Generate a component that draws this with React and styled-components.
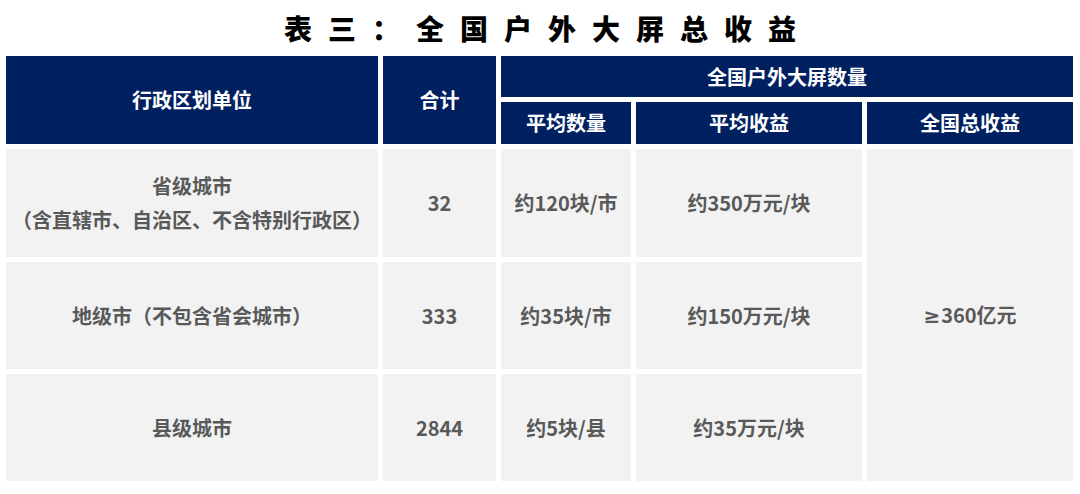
import React from 'react';
import styled, { createGlobalStyle } from 'styled-components';

const GlobalStyle = createGlobalStyle`
  html, body {
    margin: 0;
    padding: 0;
    background: #ffffff;
  }
  body {
    font-family: "Noto Sans CJK SC", "Noto Sans", sans-serif;
  }
`;

const Page = styled.div`
  width: 1080px;
  height: 494px;
  padding: 0 6px;
  box-sizing: border-box;
  background: #ffffff;
`;

const Title = styled.h1`
  margin: 0;
  height: 56px;
  display: flex;
  align-items: center;
  justify-content: center;
  padding-left: 16px;
  font-size: 28px;
  font-weight: 900;
  letter-spacing: 16px;
  color: #000000;
`;

const Grid = styled.div`
  display: grid;
  grid-template-columns: 372px 113px 130px 226px 206px;
  grid-template-rows: 41px 42px 108px 107px 107px;
  gap: 5px;
`;

const Cell = styled.div`
  grid-column: ${(p) => p.$col};
  grid-row: ${(p) => p.$row};
  display: flex;
  flex-direction: column;
  align-items: center;
  justify-content: center;
  text-align: center;
  font-size: 20px;
  font-weight: 700;
  line-height: 34px;
  background: ${(p) => (p.$head ? '#002060' : '#f2f2f2')};
  color: ${(p) => (p.$head ? '#ffffff' : '#595959')};
`;

const Sign = styled.span`
  font-family: "Noto Sans", "DejaVu Sans", sans-serif;
  font-weight: 700;
  margin-right: 1px;
`;

const rows = [
  {
    name: ['省级城市', '（含直辖市、自治区、不含特别行政区）'],
    total: '32',
    count: '约120块/市',
    income: '约350万元/块',
  },
  {
    name: ['地级市（不包含省会城市）'],
    total: '333',
    count: '约35块/市',
    income: '约150万元/块',
  },
  {
    name: ['县级城市'],
    total: '2844',
    count: '约5块/县',
    income: '约35万元/块',
  },
];

const App = () => {
  return (
    <Page>
      <GlobalStyle />
      <Title>表三：全国户外大屏总收益</Title>
      <Grid>
        <Cell $head $col="1" $row="1 / span 2">行政区划单位</Cell>
        <Cell $head $col="2" $row="1 / span 2">合计</Cell>
        <Cell $head $col="3 / span 3" $row="1">全国户外大屏数量</Cell>
        <Cell $head $col="3" $row="2">平均数量</Cell>
        <Cell $head $col="4" $row="2">平均收益</Cell>
        <Cell $head $col="5" $row="2">全国总收益</Cell>
        {rows.map((r, i) => (
          <React.Fragment key={r.total}>
            <Cell $col="1" $row={i + 3}>
              {r.name.map((line) => (
                <span key={line}>{line}</span>
              ))}
            </Cell>
            <Cell $col="2" $row={i + 3}>{r.total}</Cell>
            <Cell $col="3" $row={i + 3}>{r.count}</Cell>
            <Cell $col="4" $row={i + 3}>{r.income}</Cell>
          </React.Fragment>
        ))}
        <Cell $col="5" $row="3 / span 3">
          <span>
            <Sign>≥</Sign>360亿元
          </span>
        </Cell>
      </Grid>
    </Page>
  );
};

export default App;
